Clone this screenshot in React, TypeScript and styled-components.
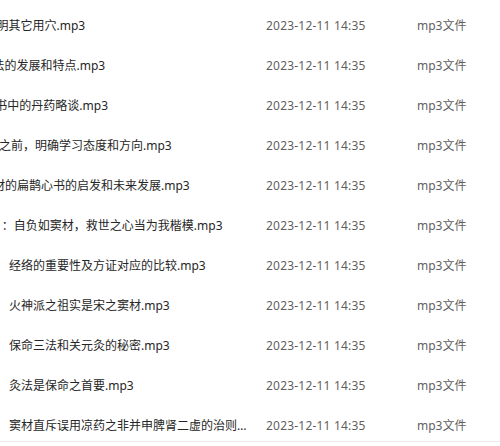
import styled, { createGlobalStyle } from "styled-components";

const GlobalStyle = createGlobalStyle`
  html, body {
    margin: 0;
    padding: 0;
    background: #ffffff;
  }
  body {
    font-family: "Noto Sans", "Noto Sans CJK SC", sans-serif;
    font-size: 12px;
  }
`;

const Page = styled.div`
  width: 500px;
  height: 446px;
  overflow: hidden;
  background: #ffffff;
  display: flex;
  flex-direction: column;
`;

const List = styled.div`
  display: flex;
  flex-direction: column;
  padding-top: 5px;
`;

const Row = styled.div`
  display: grid;
  grid-template-columns: 266px 151px 1fr;
  height: 40px;
  align-items: center;
`;

const NameCell = styled.div`
  padding: 0 19px 0 9px;
  overflow: hidden;
  white-space: nowrap;
  color: #262626;
`;

const NameText = styled.span<{ $shift: number }>`
  display: block;
  margin-left: ${(p) => p.$shift}px;
  overflow: hidden;
  text-overflow: ellipsis;
`;

const DateCell = styled.div`
  color: #5f5f5f;
  white-space: nowrap;
  letter-spacing: 0.2px;
`;

const TypeCell = styled.div`
  color: #5f5f5f;
  white-space: nowrap;
`;

const Footer = styled.div`
  margin-top: -4px;
  border-top: 1px solid #ebebeb;
  flex: 1;
  background: #ffffff;
`;

const files = [
  { name: "明其它用穴.mp3", shift: -12.5 },
  { name: "法的发展和特点.mp3", shift: -16.5 },
  { name: "书中的丹药略谈.mp3", shift: -13.7 },
  { name: "之前，明确学习态度和方向.mp3", shift: -10 },
  { name: "材的扁鹊心书的启发和未来发展.mp3", shift: -16 },
  { name: "：自负如窦材，救世之心当为我楷模.mp3", shift: -7.2 },
  { name: "经络的重要性及方证对应的比较.mp3", shift: 0 },
  { name: "火神派之祖实是宋之窦材.mp3", shift: 0 },
  { name: "保命三法和关元灸的秘密.mp3", shift: 0 },
  { name: "灸法是保命之首要.mp3", shift: 0 },
  { name: "窦材直斥误用凉药之非并申脾肾二虚的治则.mp3", shift: 0 },
];

export default function App() {
  return (
    <>
      <GlobalStyle />
      <Page>
        <List>
          {files.map((f, i) => (
            <Row key={i}>
              <NameCell>
                <NameText $shift={f.shift}>{f.name}</NameText>
              </NameCell>
              <DateCell>2023-12-11 14:35</DateCell>
              <TypeCell>mp3文件</TypeCell>
            </Row>
          ))}
        </List>
        <Footer />
      </Page>
    </>
  );
}
